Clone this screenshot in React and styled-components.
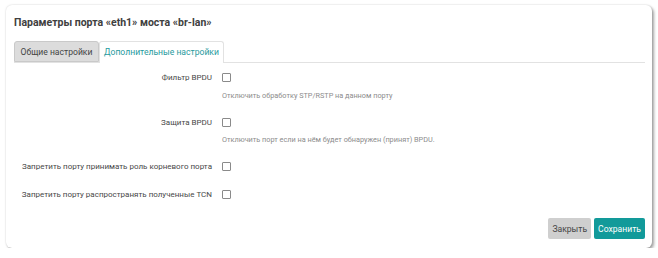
import React from 'react';
import styled, { createGlobalStyle } from 'styled-components';

const Global = createGlobalStyle`
  html, body {
    margin: 0;
    background: #fff;
    font-family: Roboto, "Liberation Sans", sans-serif;
  }
`;

const Page = styled.div`
  padding: 5px 6px 0 6px;
  width: 646px;
`;

const Card = styled.div`
  box-sizing: border-box;
  height: 243px;
  background: #fff;
  border-radius: 6px;
  box-shadow: 2px 2px 3px rgba(0, 0, 0, 0.35), 0 0 2px rgba(0, 0, 0, 0.18);
  padding: 11px 7px 0 8px;
  display: flex;
  flex-direction: column;
`;

const Title = styled.h3`
  margin: 0;
  font-size: 10.5px;
  font-weight: 700;
  color: #404040;
  line-height: 14px;
  white-space: nowrap;
`;

const Tabs = styled.div`
  display: flex;
  margin-top: 11px;
  border-bottom: 1px solid #e2e2e2;
  height: 21px;
`;

const Tab = styled.div`
  box-sizing: border-box;
  font-size: 8.6px;
  line-height: 20px;
  white-space: nowrap;
  height: ${(p) => (p.$active ? '22px' : '21px')};
  border: 1px solid ${(p) => (p.$active ? '#e2e2e2' : '#c9c9c9')};
  border-bottom: ${(p) => (p.$active ? 'none' : '1px solid #c9c9c9')};
  border-radius: 3px 3px 0 0;
  background: ${(p) => (p.$active ? '#fff' : '#dcdcdc')};
  color: ${(p) => (p.$active ? '#1f9a9e' : '#444')};
  width: ${(p) => p.$w}px;
  text-align: center;
`;

const Form = styled.div`
  display: grid;
  grid-template-columns: 198px 1fr;
  column-gap: 10px;
  margin-top: 8px;
`;

const Label = styled.div`
  font-size: 8px;
  color: #484848;
  text-align: right;
  line-height: 11px;
  white-space: nowrap;
  align-self: center;
`;

const Field = styled.div`
  height: ${(p) => p.$h}px;
  display: flex;
  align-items: center;
`;

const Box = styled.span`
  box-sizing: border-box;
  width: 9px;
  height: 9px;
  border: 1px solid #8a8a8a;
  border-radius: 1px;
  background: #fff;
`;

const Desc = styled.div`
  grid-column: 2;
  font-size: 7.3px;
  color: #8c8c8c;
  line-height: 10px;
  white-space: nowrap;
  margin-top: ${(p) => p.$mt}px;
  margin-bottom: ${(p) => p.$mb}px;
`;

const Spacer = styled.div`
  grid-column: 1 / span 2;
  height: ${(p) => p.$h}px;
`;

const Footer = styled.div`
  margin-top: auto;
  margin-bottom: 9px;
  display: flex;
  justify-content: flex-end;
  gap: 3px;
`;

const Button = styled.button`
  font-family: inherit;
  font-size: 8.6px;
  height: 21px;
  border: none;
  border-radius: 2px;
  padding: 0 4px;
  background: ${(p) => (p.$primary ? '#129a9a' : '#cfcfcf')};
  color: ${(p) => (p.$primary ? '#fff' : '#444')};
`;

const Row = ({ label }) => (
  <>
    <Label>{label}</Label>
    <Field $h={12}>
      <Box />
    </Field>
  </>
);

export default function App() {
  return (
    <Page>
      <Global />
      <Card>
        <Title>Параметры порта «eth1» моста «br-lan»</Title>
        <Tabs>
          <Tab $w={85}>Общие настройки</Tab>
          <Tab $active $w={125}>Дополнительные настройки</Tab>
        </Tabs>
        <Form>
          <Row label="Фильтр BPDU" />
          <Desc $mt={8} $mb={15}>Отключить обработку STP/RSTP на данном порту</Desc>
          <Row label="Защита BPDU" />
          <Desc $mt={7} $mb={15}>Отключить порт если на нём будет обнаружен (принят) BPDU.</Desc>
          <Row label="Запретить порту принимать роль корневого порта" />
          <Spacer $h={16} />
          <Row label="Запретить порту распространять полученные TCN" />
        </Form>
        <Footer>
          <Button>Закрыть</Button>
          <Button $primary>Сохранить</Button>
        </Footer>
      </Card>
    </Page>
  );
}
